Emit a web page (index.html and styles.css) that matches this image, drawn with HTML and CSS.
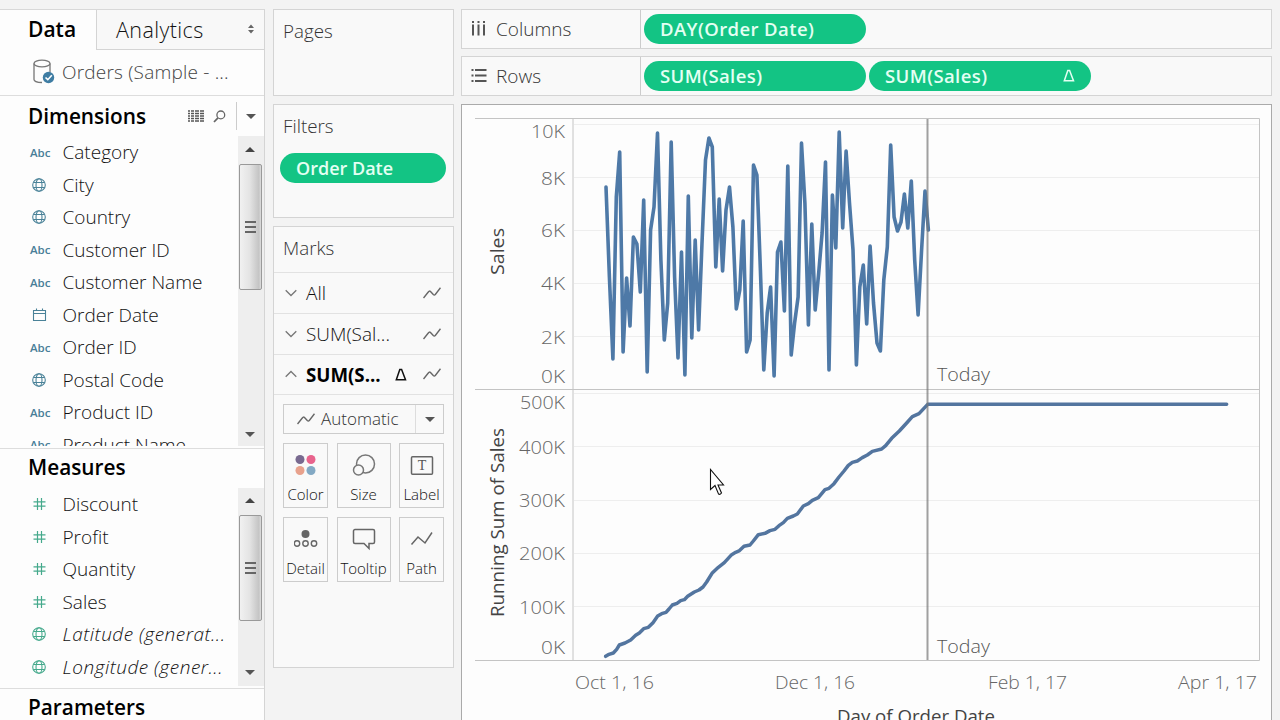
FILE: index.html
```
<!DOCTYPE html>
<html lang="en">
<head>
    <meta charset="UTF-8">
    <meta name="viewport" content="width=device-width, initial-scale=1.0">
    <title>Running Sum of Sales</title>
    <link rel="stylesheet" href="styles.css">
</head>
<body>
    <svg class="defs" width="0" height="0">
        <symbol id="globe" viewBox="0 0 16 16">
            <g fill="none" stroke="currentColor" stroke-width="1.1">
                <circle cx="8" cy="8" r="6.3"/>
                <ellipse cx="8" cy="8" rx="3" ry="6.3"/>
                <path d="M2.5 5.5h11M2.5 10.5h11"/>
            </g>
        </symbol>
        <symbol id="calendar" viewBox="0 0 16 16">
            <path d="M2.5 3.5h12v10h-12zM2.5 6.5h12M5.5 1.5v2M11.5 1.5v2" fill="none" stroke="currentColor" stroke-width="1.1"/>
        </symbol>
        <symbol id="hash" viewBox="0 0 16 16">
            <path d="M6.5 2v12M10.5 2v12M2.5 5.8h12M2.5 10.2h12" fill="none" stroke="currentColor" stroke-width="1.2"/>
        </symbol>
        <symbol id="line" viewBox="0 0 18 12">
            <path d="M.5 11L5.500 4.800Q6.500 3.500 7.500 4.500L10.300 7.500Q11.300 8.500 12.300 7.500L17.500 .8" fill="none" stroke="currentColor" stroke-width="1.4"/>
        </symbol>
        <symbol id="down" viewBox="0 0 12 8">
            <path d="M.7 1.2L6 6.500l5.300-5.300" fill="none" stroke="currentColor" stroke-width="1.3"/>
        </symbol>
        <symbol id="delta" viewBox="0 0 12 13">
            <path d="M1.300 11.700L4.800 1.500h1.800l3.900 10.200z" fill="none" stroke="currentColor" stroke-width="1.500"/>
        </symbol>
    </svg>

    <div class="app">
        <aside class="sidebar">
            <div class="tabs">
                <div class="tab active">Data</div>
                <div class="tab"><span>Analytics</span>
                    <svg width="8" height="10" viewBox="0 0 8 10"><path d="M4 .5L7 4H1zM4 9.500L7 6H1z" fill="#666"/></svg>
                </div>
            </div>
            <div class="source">
                <svg width="22" height="26" viewBox="0 0 22 26">
                    <g fill="none" stroke="#777" stroke-width="1.300">
                        <ellipse cx="9" cy="4.500" rx="8" ry="3.300"/>
                        <path d="M1 4.500v16c0 1.500 3 3 8 3M17 4.500v9"/>
                    </g>
                    <circle cx="15.500" cy="18.500" r="5.700" fill="#3f7da3"/>
                    <path d="M12.500 18.500l2.300 2.200 4-4.400" fill="none" stroke="#fff" stroke-width="1.600"/>
                </svg>
                <span>Orders (Sample - ...</span>
            </div>
            <div class="pane dimensions">
                <div class="pane-head">
                    <h2>Dimensions</h2>
                    <svg class="grid-icon" width="16" height="12" viewBox="0 0 16 12"><path d="M0 1h16M0 3.500h16M0 6h16M0 8.500h16M0 11h16" stroke="#555" stroke-width="1.300" stroke-dasharray="2 1 3 1 4 1 4 1"/></svg>
                    <svg class="search-icon" width="13" height="13" viewBox="0 0 13 13"><circle cx="7.800" cy="4.900" r="3.900" fill="none" stroke="#666" stroke-width="1.300"/><path d="M5 7.800L1 12" stroke="#666" stroke-width="1.800"/></svg>
                    <div class="menu-button"><i class="caret"></i></div>
                </div>
                <div class="pane-body">
                    <ul class="fields">
                        <li><b>Abc</b>Category</li>
                        <li><svg><use href="#globe"/></svg>City</li>
                        <li><svg><use href="#globe"/></svg>Country</li>
                        <li><b>Abc</b>Customer ID</li>
                        <li><b>Abc</b>Customer Name</li>
                        <li><svg><use href="#calendar"/></svg>Order Date</li>
                        <li><b>Abc</b>Order ID</li>
                        <li><svg><use href="#globe"/></svg>Postal Code</li>
                        <li><b>Abc</b>Product ID</li>
                        <li><b>Abc</b>Product Name</li>
                    </ul>
                    <div class="scrollbar"><i class="caret up"></i><div class="thumb"></div><i class="caret"></i></div>
                </div>
            </div>
            <div class="pane measures">
                <div class="pane-head"><h2>Measures</h2></div>
                <div class="pane-body">
                    <ul class="fields">
                        <li><svg><use href="#hash"/></svg>Discount</li>
                        <li><svg><use href="#hash"/></svg>Profit</li>
                        <li><svg><use href="#hash"/></svg>Quantity</li>
                        <li><svg><use href="#hash"/></svg>Sales</li>
                        <li class="generated"><svg><use href="#globe"/></svg>Latitude (generat...</li>
                        <li class="generated"><svg><use href="#globe"/></svg>Longitude (gener...</li>
                    </ul>
                    <div class="scrollbar"><i class="caret up"></i><div class="thumb"></div><i class="caret"></i></div>
                </div>
            </div>
            <div class="pane parameters">
                <div class="pane-head"><h2>Parameters</h2></div>
            </div>
        </aside>

        <section class="cards">
            <div class="card pages"><h3>Pages</h3></div>
            <div class="card filters">
                <h3>Filters</h3>
                <div class="pill">Order Date</div>
            </div>
            <div class="card marks">
                <h3>Marks</h3>
                <div class="mark-row"><svg class="chevron"><use href="#down"/></svg><span>All</span><svg class="line-icon"><use href="#line"/></svg></div>
                <div class="mark-row"><svg class="chevron"><use href="#down"/></svg><span>SUM(Sal...</span><svg class="line-icon"><use href="#line"/></svg></div>
                <div class="mark-row current"><svg class="chevron open"><use href="#down"/></svg><span>SUM(S...</span><svg class="delta"><use href="#delta"/></svg><svg class="line-icon"><use href="#line"/></svg></div>
                <div class="mark-type">
                    <svg class="line-icon"><use href="#line"/></svg><span>Automatic</span>
                    <div class="drop"><i class="caret"></i></div>
                </div>
                <div class="mark-buttons">
                    <div class="mark-button">
                        <svg viewBox="0 0 24 24"><circle cx="6" cy="6.500" r="4.500" fill="#78698f"/><circle cx="17" cy="6.500" r="4.500" fill="#e8638c"/><circle cx="6" cy="17.500" r="4.500" fill="#e8a18c"/><circle cx="17" cy="17.500" r="4.500" fill="#83a9c4"/></svg>
                        <span>Color</span>
                    </div>
                    <div class="mark-button">
                        <svg viewBox="0 0 24 24"><g fill="#f9f9f9" stroke="#777" stroke-width="1.500"><circle cx="13.500" cy="11" r="9"/><circle cx="6.500" cy="17" r="5"/></g></svg>
                        <span>Size</span>
                    </div>
                    <div class="mark-button">
                        <svg viewBox="0 0 24 24"><rect x="1.500" y="3.700" width="21" height="17.500" rx="1" fill="none" stroke="#666" stroke-width="1.500"/><text x="12" y="17" class="glyph-t">T</text></svg>
                        <span>Label</span>
                    </div>
                    <div class="mark-button">
                        <svg viewBox="0 0 24 24"><circle cx="11.500" cy="7" r="4" fill="#666"/><g fill="none" stroke="#666" stroke-width="1.400"><circle cx="3" cy="16.500" r="2.700"/><circle cx="11.500" cy="16.500" r="2.700"/><circle cx="20" cy="16.500" r="2.700"/></g></svg>
                        <span>Detail</span>
                    </div>
                    <div class="mark-button">
                        <svg viewBox="0 0 24 24"><path d="M3 2.500h18a1.500 1.500 0 0 1 1.500 1.500v11a1.500 1.500 0 0 1-1.500 1.500h-4v5l-5-5H3a1.500 1.500 0 0 1-1.500-1.500v-11A1.500 1.500 0 0 1 3 2.500z" fill="none" stroke="#666" stroke-width="1.500"/></svg>
                        <span>Tooltip</span>
                    </div>
                    <div class="mark-button">
                        <svg viewBox="0 0 24 24"><path d="M1.500 17.500L8 10l7 6L22 5.500" fill="none" stroke="#666" stroke-width="1.500"/></svg>
                        <span>Path</span>
                    </div>
                </div>
            </div>
        </section>

        <main class="sheet">
            <div class="shelf">
                <div class="shelf-name">
                    <svg width="16" height="16" viewBox="0 0 16 16"><path d="M2 0v2M7.500 0v2M13 0v2M2 3.500v11M7.500 3.500v11M13 3.500v11" stroke="#555" stroke-width="2"/></svg>
                    <span>Columns</span>
                </div>
                <div class="pill">DAY(Order Date)</div>
            </div>
            <div class="shelf">
                <div class="shelf-name">
                    <svg width="16" height="16" viewBox="0 0 16 16"><path d="M.5 2h2M.5 7.500h2M.5 13h2M4 2h11.500M4 7.500h11.500M4 13h11.500" stroke="#555" stroke-width="2"/></svg>
                    <span>Rows</span>
                </div>
                <div class="pill">SUM(Sales)</div>
                <div class="pill">SUM(Sales)<svg class="delta"><use href="#delta"/></svg></div>
            </div>
            <div class="view">
                <svg class="chart" width="809" height="615" viewBox="462 105 809 615">
                    <g class="gridlines">
                        <path d="M574 124.500h685M574 177.500h685M574 230.500h685M574 283.500h685M574 336.500h685"/>
                        <path d="M574 393.500h685M574 446.500h685M574 500.500h685M574 553.500h685M574 606.500h685"/>
                    </g>
                    <g class="frame">
                        <path d="M475 118.500h784.500V660.500H475M475 389.500h784.500M573 118v542"/>
                    </g>
                    <polyline id="daily" class="mark"/>
                    <polyline class="mark running" transform="translate(465 380) scale(.33333)" points="422,829 432,823 445,819 455,808 463,795 480,789 497,780 512,766 523,759 536,746 550,742 564,728 578,708 590,701 603,697 612,687 622,675 636,670 647,662 658,659 668,649 688,636 702,630 714,621 725,606 741,580 760,562 778,548 800,524 812,517 822,513 837,499 855,495 865,483 880,464 900,460 915,452 930,448 942,437 955,428 967,415 985,408 997,402 1015,378 1030,371 1042,361 1060,353 1080,329 1092,325 1107,311 1122,291 1137,273 1150,256 1162,247 1177,243 1192,233 1207,225 1222,214 1250,207 1262,197 1280,175 1303,153 1325,129 1342,110 1362,101 1388,73 2285,73"/>
                    <path class="today" d="M927.500 119v541"/>
                    <g class="axis" text-anchor="end">
                        <text x="565" y="137.500" textLength="34" lengthAdjust="spacingAndGlyphs">10K</text>
                        <text x="565" y="184.500" textLength="24" lengthAdjust="spacingAndGlyphs">8K</text>
                        <text x="565" y="237" textLength="24" lengthAdjust="spacingAndGlyphs">6K</text>
                        <text x="565" y="290" textLength="24" lengthAdjust="spacingAndGlyphs">4K</text>
                        <text x="565" y="343.500" textLength="24" lengthAdjust="spacingAndGlyphs">2K</text>
                        <text x="565" y="382.500" textLength="24" lengthAdjust="spacingAndGlyphs">0K</text>
                        <text x="565" y="408.500" textLength="45" lengthAdjust="spacingAndGlyphs">500K</text>
                        <text x="565" y="453.500" textLength="46" lengthAdjust="spacingAndGlyphs">400K</text>
                        <text x="565" y="507" textLength="46" lengthAdjust="spacingAndGlyphs">300K</text>
                        <text x="565" y="560" textLength="46" lengthAdjust="spacingAndGlyphs">200K</text>
                        <text x="565" y="613.500" textLength="46" lengthAdjust="spacingAndGlyphs">100K</text>
                        <text x="565" y="653.500" textLength="24" lengthAdjust="spacingAndGlyphs">0K</text>
                    </g>
                    <g class="axis">
                        <text x="575" y="689" textLength="79" lengthAdjust="spacingAndGlyphs">Oct 1, 16</text>
                        <text x="775" y="689" textLength="80" lengthAdjust="spacingAndGlyphs">Dec 1, 16</text>
                        <text x="988" y="689" textLength="79" lengthAdjust="spacingAndGlyphs">Feb 1, 17</text>
                        <text x="1178" y="689" textLength="79" lengthAdjust="spacingAndGlyphs">Apr 1, 17</text>
                    </g>
                    <g class="note">
                        <text x="937" y="381" textLength="53" lengthAdjust="spacingAndGlyphs">Today</text>
                        <text x="937" y="652.500" textLength="53" lengthAdjust="spacingAndGlyphs">Today</text>
                    </g>
                    <g class="title">
                        <text transform="translate(504 275) rotate(-90)" textLength="47" lengthAdjust="spacingAndGlyphs">Sales</text>
                        <text transform="translate(504 617) rotate(-90)" textLength="189" lengthAdjust="spacingAndGlyphs">Running Sum of Sales</text>
                        <text x="837" y="723" textLength="158" lengthAdjust="spacingAndGlyphs">Day of Order Date</text>
                    </g>
                    <path class="cursor" d="M710.500 469.500v20l4.500-4 3.500 8.500q1.500 1 3-1l-3.500-8h5.500z"/>
                </svg>
            </div>
        </main>
    </div>

    <script>
        // one point per day, starting at the first order date
        const daily = [
            187, 277, 359, 197, 152, 352, 278, 326, 237, 244, 292, 200, 372, 230, 207, 133, 260, 340, 303, 142,
            277, 358, 252, 375, 196, 338, 240, 330, 243, 160, 138, 147, 267, 199, 271, 210, 187, 227, 309, 290,
            221, 352, 340, 165, 175, 270, 370, 313, 287, 376, 252, 242, 311, 166, 355, 323, 297, 143, 203, 325,
            224, 310, 273, 233, 162, 370, 195, 248, 132, 228, 151, 203, 250, 365, 287, 265, 324, 246, 303, 343,
            351, 280, 247, 145, 217, 231, 222, 194, 228, 181, 260, 315, 250, 191, 230
        ];
        const points = daily.map((y, i) => `${(606 + i * 3.43).toFixed(1)},${y}`);
        document.getElementById('daily').setAttribute('points', points.join(' '));
    </script>
</body>
</html>
```
FILE: styles.css
```
* {
    box-sizing: border-box;
}
body {
    margin: 0;
    height: 720px;
    overflow: hidden;
    background: #f3f3f3;
    color: #111;
    font-family: "Open Sans", "Noto Sans", sans-serif;
    font-size: 19px;
    font-weight: 300;
}
h2, h3, ul {
    margin: 0;
    padding: 0;
}
.defs {
    position: absolute;
}
.app {
    display: grid;
    grid-template-columns: 265px 181px 811px;
    column-gap: 8px;
    height: 720px;
    padding-top: 9px;
}
.sheet {
    margin-left: -1px;
    margin-right: 1px;
}
.caret {
    width: 0;
    height: 0;
    border: 5px solid transparent;
    border-top-color: #555;
    border-bottom: 0;
}
.caret.up {
    border-top: 0;
    border-bottom: 5px solid #444;
}

/* data pane */
.sidebar {
    display: flex;
    flex-direction: column;
    height: 711px;
    overflow: hidden;
    background: #fdfdfd;
    border-top: 1px solid #d8d8d8;
    border-right: 1px solid #d4d4d4;
}
.tabs {
    display: flex;
    flex: 0 0 40px;
}
.tab {
    display: flex;
    flex: 1;
    align-items: center;
    justify-content: space-between;
    padding: 0 9px 1px 19px;
    background: #f8f8f8;
    border-left: 1px solid #d4d4d4;
    border-bottom: 1px solid #d4d4d4;
    font-size: 21.5px;
    letter-spacing: .4px;
}
.tab.active {
    flex: 0 0 96px;
    padding: 0 0 3px 28px;
    background: none;
    border: 0;
    color: #000;
    font-size: 21px;
    font-weight: 600;
    letter-spacing: 0;
}
.source {
    display: flex;
    flex: 0 0 46px;
    align-items: center;
    gap: 7px;
    padding: 0 0 1px 33px;
    border-bottom: 1px solid #ddd;
    color: #444;
    letter-spacing: .2px;
}
.pane {
    display: flex;
    flex-direction: column;
    flex-shrink: 0;
    border-bottom: 1px solid #ddd;
}
.dimensions {
    height: 353px;
}
.measures {
    height: 240px;
}
.pane-head {
    display: flex;
    align-items: center;
    flex: 0 0 39px;
    padding: 0 0 4px 28px;
}
.dimensions .pane-head {
    flex-basis: 40px;
    padding-bottom: 0;
}
.pane-head h2 {
    color: #000;
    font-size: 20.8px;
    font-weight: 600;
}
.grid-icon {
    margin-left: auto;
}
.search-icon {
    margin: 0 10px 0 9px;
}
.menu-button {
    display: flex;
    align-items: center;
    justify-content: center;
    width: 28px;
    height: 28px;
    border-left: 1px solid #ccc;
}
.pane-body {
    display: flex;
    flex: 1;
    min-height: 0;
    padding-bottom: 2px;
}
.fields {
    flex: 1;
    overflow: hidden;
    list-style: none;
    white-space: nowrap;
}
.fields li {
    display: flex;
    align-items: center;
    height: 32.5px;
    padding-left: 30px;
}
.fields b {
    width: 32.5px;
    color: #4a7f98;
    font-size: 11.5px;
    font-weight: 600;
}
.fields svg {
    width: 16px;
    height: 16px;
    margin: 0 15.5px 0 1px;
    color: #4a8298;
}
.measures .fields svg {
    color: #45a98c;
}
.generated {
    font-style: italic;
    letter-spacing: .5px;
}
.scrollbar {
    display: flex;
    flex-direction: column;
    align-items: center;
    width: 26px;
    padding: 11px 2px 9px 0;
    background: #eee;
}
.scrollbar .caret:last-child {
    margin-top: auto;
}
.thumb {
    width: 23px;
    height: 126px;
    margin-top: 12px;
    background:
        repeating-linear-gradient(#666 0 1.5px, transparent 1.5px 5px) center / 11px 12px no-repeat,
        linear-gradient(90deg, #f1f1f1, #e4e4e4 45%, #c4c4c4 90%, #ddd);
    border: 1px solid #999;
    border-radius: 2px;
}
.measures .scrollbar {
    padding-top: 10px;
    padding-bottom: 11px;
}
.measures .thumb {
    height: 106px;
}

/* cards */
.cards {
    display: flex;
    flex-direction: column;
    gap: 8px;
}
.card {
    background: #f9f9f9;
    border: 1px solid #d4d4d4;
}
.card h3 {
    padding: 9px 9px 11px;
    color: #333;
    font-size: 18.8px;
    font-weight: 300;
    line-height: 25px;
}
.pages {
    height: 87px;
}
.filters {
    height: 114px;
}
.marks {
    height: 442px;
}
.pill {
    display: flex;
    align-items: center;
    justify-content: space-between;
    height: 30px;
    padding: 0 16px 1px;
    border-radius: 15px;
    background: #13c484;
    color: #e4fff3;
    font-size: 18.5px;
    font-weight: 600;
    letter-spacing: .4px;
}
.filters .pill {
    margin: 3px 7px 0 6px;
    padding-bottom: 0;
    font-size: 18px;
    letter-spacing: 0;
}
.delta {
    width: 12px;
    height: 13px;
}
.mark-row {
    display: flex;
    align-items: center;
    height: 41px;
    padding: 0 12px 1px 11px;
    border-top: 1px solid #e2e2e2;
}
.mark-row span {
    margin-left: 9px;
}
.mark-row .line-icon {
    margin-left: auto;
}
.mark-row .delta {
    margin-left: 14px;
}
.mark-row.current {
    border-bottom: 1px solid #e2e2e2;
}
.current span {
    color: #000;
    font-size: 18.7px;
    font-weight: 700;
}
.chevron {
    width: 12px;
    height: 8px;
    color: #777;
}
.chevron.open {
    transform: scaleY(-1);
}
.line-icon {
    width: 18px;
    height: 12px;
    color: #666;
}
.mark-type {
    display: flex;
    align-items: center;
    height: 30px;
    margin: 9px;
    padding-left: 13px;
    border: 1px solid #ccc;
    color: #333;
    font-size: 17px;
}
.mark-type span {
    margin: 0 0 1px 6px;
}
.drop {
    display: flex;
    align-items: center;
    justify-content: center;
    width: 28px;
    height: 28px;
    margin-left: auto;
    border-left: 1px solid #ddd;
}
.mark-buttons {
    display: grid;
    grid-template-columns: 45px 54px 45px;
    justify-content: space-between;
    row-gap: 9px;
    margin: 0 9px;
}
.mark-button {
    display: flex;
    flex-direction: column;
    align-items: center;
    height: 65px;
    padding-top: 9px;
    border: 1px solid #ccc;
    font-size: 15px;
}
.mark-button svg {
    width: 24px;
    height: 24px;
}
.mark-button span {
    margin-top: 7px;
    line-height: 20px;
}
.glyph-t {
    fill: #555;
    font: 14px "Liberation Serif", serif;
    text-anchor: middle;
}

/* shelves and view */
.shelf {
    display: flex;
    align-items: center;
    gap: 3px;
    height: 40px;
    margin-bottom: 7px;
    background: #f9f9f9;
    border: 1px solid #d4d4d4;
}
.shelf + .shelf {
    margin-bottom: 8px;
}
.shelf-name {
    display: flex;
    align-items: center;
    gap: 9px;
    width: 179px;
    height: 38px;
    padding: 0 0 1px 9px;
    border-right: 1px solid #ccc;
    color: #333;
}
.shelf .pill {
    width: 222px;
}
.view {
    height: 617px;
    background: #fdfdfd;
    border: 1px solid #aaa;
}
.chart {
    display: block;
    font-size: 19px;
}
.gridlines {
    stroke: #eee;
}
.frame {
    fill: none;
    stroke: #c4c4c4;
}
.mark {
    fill: none;
    stroke: #4e79a7;
    stroke-width: 3.6;
    stroke-linecap: round;
    stroke-linejoin: round;
}
.running {
    stroke: #53759f;
    stroke-width: 10.5;
}
.today {
    stroke: #777;
    stroke-opacity: .7;
    stroke-width: 2;
}
.axis {
    fill: #666;
}
.note {
    fill: #555;
}
.title {
    fill: #444;
    font-weight: 400;
}
.cursor {
    fill: #fff;
    stroke: #111;
    stroke-width: 1.1;
}
```
